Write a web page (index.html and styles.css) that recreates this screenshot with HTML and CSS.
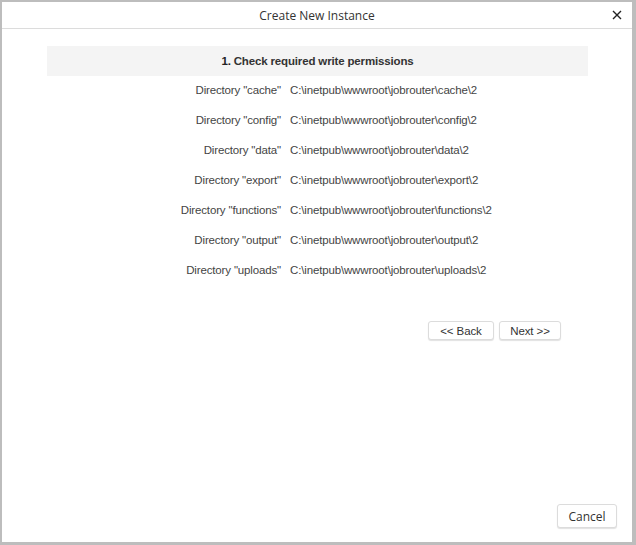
FILE: index.html
```html
<!DOCTYPE html>
<html>
<head>
<meta charset="utf-8">
<link rel="stylesheet" href="styles.css">
</head>
<body>
<div class="dialog">
  <div class="header">
    <span class="title">Create New Instance</span>
    <span class="close">
      <svg width="10" height="10" viewBox="0 0 10 10"><path d="M1 1 L9 9 M9 1 L1 9" stroke="#222" stroke-width="1.4" fill="none"/></svg>
    </span>
  </div>
  <div class="body">
    <div class="banner"><b>1.</b> Check required write permissions</div>
    <div class="rows">
      <div class="label">Directory "cache"</div><div class="path">C:\inetpub\wwwroot\jobrouter\cache\2</div>
      <div class="label">Directory "config"</div><div class="path">C:\inetpub\wwwroot\jobrouter\config\2</div>
      <div class="label">Directory "data"</div><div class="path">C:\inetpub\wwwroot\jobrouter\data\2</div>
      <div class="label">Directory "export"</div><div class="path">C:\inetpub\wwwroot\jobrouter\export\2</div>
      <div class="label">Directory "functions"</div><div class="path">C:\inetpub\wwwroot\jobrouter\functions\2</div>
      <div class="label">Directory "output"</div><div class="path">C:\inetpub\wwwroot\jobrouter\output\2</div>
      <div class="label">Directory "uploads"</div><div class="path">C:\inetpub\wwwroot\jobrouter\uploads\2</div>
    </div>
    <div class="nav">
      <button class="btn back">&lt;&lt; Back</button>
      <button class="btn next">Next &gt;&gt;</button>
    </div>
  </div>
  <div class="footer">
    <button class="btn cancel">Cancel</button>
  </div>
</div>
</body>
</html>
```
FILE: styles.css
```css
html, body {
  margin: 0;
  padding: 0;
}
body {
  background: #bdbdbd;
  padding: 2px 4px 3px 2px;
  box-sizing: border-box;
  height: 545px;
  width: 636px;
}
.dialog {
  background: #fff;
  height: 100%;
  display: flex;
  flex-direction: column;
  font-family: "Liberation Sans", Arial, sans-serif;
  font-size: 11.5px;
  letter-spacing: -0.15px;
  color: #333;
}
.header {
  height: 26px;
  border-bottom: 1px solid #dcdcdc;
  display: flex;
  align-items: center;
  justify-content: center;
  position: relative;
}
.title {
  font-family: "Open Sans", sans-serif;
  font-size: 12px;
  letter-spacing: 0;
  color: #333;
}
.close {
  position: absolute;
  right: 10px;
  top: 8px;
  width: 10px;
  height: 10px;
  display: flex;
}
.body {
  flex: 1;
  padding: 17px 44px 0 45px;
}
.banner {
  background: #f4f4f4;
  height: 30px;
  display: flex;
  align-items: center;
  justify-content: center;
  font-weight: 700;
  color: #333;
}
.banner b {
  margin-right: 3px;
  color: #222;
}
.rows {
  display: grid;
  grid-template-columns: 242px 1fr;
  grid-auto-rows: 30px;
  align-items: center;
  margin-top: -1px;
}
.label {
  text-align: right;
  padding-right: 8px;
  color: #444;
}
.path {
  padding-left: 1px;
  color: #444;
}
.nav {
  display: flex;
  justify-content: flex-end;
  gap: 5px;
  margin-top: 36px;
  padding-right: 27px;
}
.btn {
  font-family: "Liberation Sans", Arial, sans-serif;
  font-size: 11.5px;
  letter-spacing: -0.1px;
  color: #333;
  background: #fff;
  border: 1px solid #dcdcdc;
  border-radius: 3px;
  box-shadow: 0 1px 1px rgba(0,0,0,0.12);
  height: 19px;
  padding: 0;
  margin: 0;
  white-space: nowrap;
}
.back {
  width: 66px;
}
.next {
  width: 62px;
}
.footer {
  display: flex;
  justify-content: flex-end;
  padding: 0 15px 14px 0;
}
.cancel {
  font-family: "Open Sans", sans-serif;
  font-size: 12px;
  letter-spacing: 0;
  height: 24px;
  width: 60px;
}
```
